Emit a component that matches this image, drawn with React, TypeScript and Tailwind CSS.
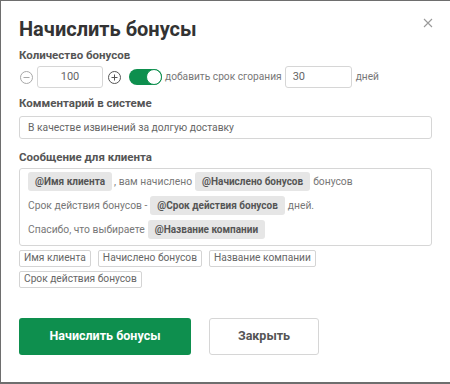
import React from "react";

const Chip = ({ children }: { children: React.ReactNode }) => (
  <span className="inline-flex h-[19px] items-center rounded-[3px] bg-[#e6e6e6] px-[7px] text-[10px] font-bold text-[#555]">
    {children}
  </span>
);

const Tag = ({ children }: { children: React.ReactNode }) => (
  <button className="flex h-[17px] items-center rounded-[2px] border border-[#d4d4d4] bg-white px-[4px] text-[10.2px] leading-none text-[#666]">
    {children}
  </button>
);

export default function App() {
  return (
    <div
      className="h-[384px] w-[450px] bg-[#6e6e6e] pl-px pt-px"
      style={{ fontFamily: 'Roboto, "Open Sans", sans-serif' }}
    >
      <div className="relative h-[381px] w-[449px] bg-white px-[18px] pt-[14px]">
        <button className="absolute right-[16px] top-[16px] flex h-[12px] w-[12px] items-center justify-center text-[#9a9a9a]">
          <svg width="10" height="10" viewBox="0 0 10 10" fill="none" stroke="currentColor" strokeWidth="1.1">
            <path d="M1 1L9 9M9 1L1 9" />
          </svg>
        </button>

        <h1 className="text-[20px] font-bold leading-[28px] text-[#333]">Начислить бонусы</h1>

        <div className="mt-[4px] text-[11.5px] font-bold leading-[16px] text-[#555]">Количество бонусов</div>
        <div className="mt-[3px] flex h-[22px] items-center">
          <svg width="13" height="13" viewBox="0 0 13 13" fill="none" stroke="#a8a8a8" strokeWidth="1" className="ml-px">
            <circle cx="6.5" cy="6.5" r="6" />
            <path d="M3.5 6.5H9.5" />
          </svg>
          <div className="ml-[4px] flex h-[22px] w-[66px] items-center justify-center rounded-[3px] border border-[#d6d6d6] text-[11px] text-[#666]">
            100
          </div>
          <svg width="13" height="13" viewBox="0 0 13 13" fill="none" stroke="#555" strokeWidth="1" className="ml-[5px]">
            <circle cx="6.5" cy="6.5" r="6" />
            <path d="M3.5 6.5H9.5M6.5 3.5V9.5" />
          </svg>
          <div className="relative ml-[8px] h-[16px] w-[33px] rounded-full bg-[#0e8f4e]">
            <div className="absolute right-0 top-0 h-[16px] w-[16px] rounded-full border-[1.5px] border-[#0e8f4e] bg-white" />
          </div>
          <span className="ml-[3px] text-[10.2px] text-[#777]">добавить срок сгорания</span>
          <div className="ml-[3px] flex h-[22px] w-[67px] items-center rounded-[3px] border border-[#d6d6d6] pl-[7px] text-[11px] text-[#666]">
            30
          </div>
          <span className="ml-[4px] text-[10.2px] text-[#777]">дней</span>
        </div>

        <div className="mt-[7px] text-[11.5px] font-bold leading-[16px] text-[#555]">Комментарий в системе</div>
        <div className="mt-[5px] flex h-[23px] w-[413px] items-center rounded-[3px] border border-[#d6d6d6] pl-[8px] text-[10.3px] text-[#666]">
          В качестве извинений за долгую доставку
        </div>

        <div className="mt-[10px] text-[11.5px] font-bold leading-[16px] text-[#555]">Сообщение для клиента</div>
        <div className="mt-[3px] flex h-[78px] w-[413px] flex-col gap-[5px] rounded-[3px] border border-[#d6d6d6] pl-[8px] pt-[3px] text-[10.3px] text-[#777]">
          <div className="flex items-center gap-[3px]">
            <Chip>@Имя клиента</Chip>
            <span className="-ml-[1px]">, вам начислено</span>
            <Chip>@Начислено бонусов</Chip>
            <span>бонусов</span>
          </div>
          <div className="flex items-center gap-[3px]">
            <span>Срок действия бонусов -</span>
            <Chip>@Срок действия бонусов</Chip>
            <span>дней.</span>
          </div>
          <div className="flex items-center gap-[3px]">
            <span>Спасибо, что выбираете</span>
            <Chip>@Название компании</Chip>
          </div>
        </div>

        <div className="mt-[4px] flex w-[413px] flex-wrap gap-x-[7px] gap-y-[4px]">
          <Tag>Имя клиента</Tag>
          <Tag>Начислено бонусов</Tag>
          <Tag>Название компании</Tag>
          <Tag>Срок действия бонусов</Tag>
        </div>

        <div className="mt-[30px] flex gap-[18px]">
          <button className="flex h-[37px] w-[172px] items-center justify-center rounded-[3px] bg-[#0e8f4e] text-[12.5px] font-bold text-white">
            Начислить бонусы
          </button>
          <button className="flex h-[37px] w-[110px] items-center justify-center rounded-[3px] border border-[#d6d6d6] bg-white text-[12.5px] font-bold text-[#555]">
            Закрыть
          </button>
        </div>
      </div>
    </div>
  );
}
